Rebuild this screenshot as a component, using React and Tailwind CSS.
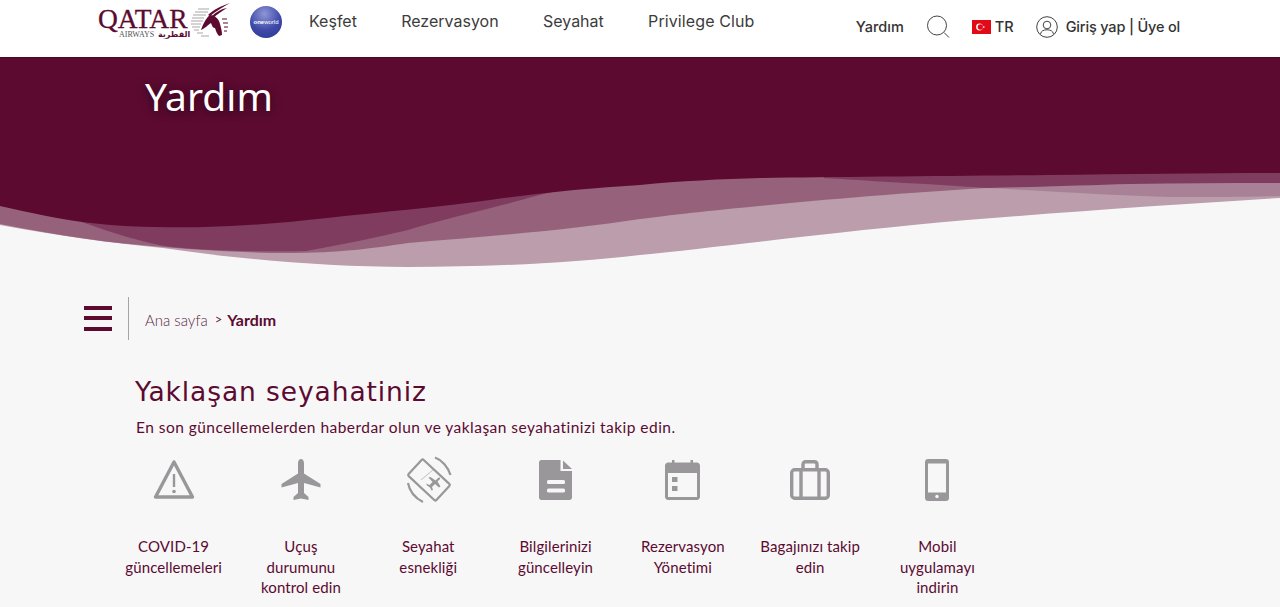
const LATO = { fontFamily: 'Lato, "Noto Sans", sans-serif' };

function Logo() {
  return (
    <div className="relative w-[134px] h-[40px] shrink-0">
      <div className="absolute left-[1px] top-[9px] text-[27.500px] leading-[20px] text-[#5c0a30] [-webkit-text-stroke:0.3px_#5c0a30]" style={{ fontFamily: '"Liberation Serif", serif' }}>QATAR</div>
      <div className="absolute left-[22px] top-[30px] text-[8px] leading-[9px] text-[#555] whitespace-nowrap" style={{ fontFamily: '"Liberation Serif", serif' }}>AIRWAYS</div>
      <div className="absolute left-[61px] top-[29px] text-[8px] leading-[11px] text-[#5c0a30] font-bold whitespace-nowrap" style={{ fontFamily: '"DejaVu Sans", sans-serif' }}>القطرية</div>
      <svg className="absolute left-[92px] top-0" width="44" height="40" viewBox="0 0 44 40">
        <g stroke="#aaa5a8" strokeWidth="1.200">
          <path d="M9 9H20M6 12H19M4 15H17M3 18H15M2 21H14M2 24H12M3 27H11M5 30H10M8 33H14M12 36H20" />
        </g>
        <path d="M41 3C32 6 24 10 19 15L21 16C27 11 34 7 41 3Z" fill="#5c0a30" />
        <path d="M38 8C32 9 27 12 23 16L25 17C29 14 33 11 38 8Z" fill="#5c0a30" />
        <path d="M12 30C14 24 17 18 21 15C26 15 30 19 31 24C32 28 33 31 33 35L30 36C28 34 27 31 26 28C24 28 23 26 22 23C19 25 15 29 12 30Z" fill="#5c0a30" />
        <path d="M33 19H38M34 23H39M35 27H39M35 31H38" stroke="#5c0a30" strokeWidth="1.200" />
      </svg>
    </div>
  );
}

function Oneworld() {
  return (
    <div className="w-[32px] h-[32px] rounded-full flex items-center justify-center shrink-0 bg-[radial-gradient(circle_at_45%_25%,#8f96d6,#3d48a8_55%,#2c3590)]">
      <span className="text-[6px] leading-none text-white whitespace-nowrap" style={{ fontFamily: '"Liberation Sans", sans-serif' }}><b>one</b>world</span>
    </div>
  );
}

function Flag() {
  return (
    <svg width="19" height="14" viewBox="0 0 19 14" className="shrink-0 block">
      <rect width="19" height="14" fill="#e30a17" />
      <circle cx="7.500" cy="7" r="3.400" fill="#fff" />
      <circle cx="8.400" cy="7" r="2.700" fill="#e30a17" />
      <path d="M10.200 7l2.600-.9-1.600 2.200V5.700l1.600 2.200z" fill="#fff" />
    </svg>
  );
}

const G = '#999799';
const BG = '#f7f7f8';

const icons = {
  warn: (
    <svg width="42" height="42" viewBox="0 0 42 42" fill="none">
      <path d="M21 3L39.500 38H2.500Z" stroke={G} strokeWidth="3.400" strokeLinejoin="round" />
      <path d="M21 15V28" stroke={G} strokeWidth="2.400" />
      <circle cx="21" cy="32.500" r="1.800" fill={G} />
    </svg>
  ),
  plane: (
    <svg width="40" height="42" viewBox="0 0 40 42">
      <path d="M20 0C21.800 0 23 1.800 23 4V14.500L39.500 25V28.500L23 24V34L27.500 38V41L20 39.500L12.500 41V38L17 34V24L.5 28.500V25L17 14.500V4C17 1.800 18.200 0 20 0Z" fill={G} />
    </svg>
  ),
  flex: (
    <svg width="46" height="48" viewBox="0 0 46 48" fill="none" className="ml-[1px]">
      <rect x="4" y="13" width="38" height="22" rx="1.500" transform="rotate(43 23 24)" stroke={G} strokeWidth="2.200" />
      <path d="M15 24L28 13" stroke={G} strokeWidth=".6" />
      <path d="M29 1.500C36 4 42 11 44.500 19M2 27C3.500 35 9 42 17 46" stroke={G} strokeWidth="2.200" />
      <path d="M20 27.500l3.500 1.500 3-3-4-4.500 2-.5 5 3.500 2.500-2.500c1-1 2.500-.5 2 1l-2.500 2.500 3 5-1.500 1-4-3.500-3 3 1 3-1.500.5-1.500-3-3-2z" fill={G} />
    </svg>
  ),
  doc: (
    <svg width="34" height="42" viewBox="0 0 34 42">
      <path d="M2.500 1H21.500V12H33V38.500C33 40 32 41 30.500 41H2.500C1 41 0 40 0 38.500V3.500C0 2 1 1 2.500 1Z" fill={G} />
      <path d="M24 1.500L33 10H24Z" fill={G} />
      <rect x="8" y="21" width="18" height="4" rx="1.500" fill={BG} />
      <rect x="8" y="29.500" width="18" height="4" rx="1.500" fill={BG} />
    </svg>
  ),
  cal: (
    <svg width="35" height="40" viewBox="0 0 35 40">
      <path d="M7 0h2.500v2.500h16V0H28v2.500h4c1.500 0 3 1.500 3 3V37c0 1.500-1.500 3-3 3H3c-1.500 0-3-1.500-3-3V5.500c0-1.500 1.500-3 3-3h4z" fill={G} />
      <rect x="3" y="13" width="29" height="24" fill={BG} />
      <rect x="7" y="17" width="5.500" height="5" fill={G} />
      <rect x="7" y="26" width="5.500" height="5" fill={G} />
    </svg>
  ),
  bag: (
    <svg width="40" height="40" viewBox="0 0 40 40" fill="none">
      <rect x="1.700" y="9.700" width="36.600" height="28.600" rx="3" stroke={G} strokeWidth="3.400" />
      <path d="M11 10V38M29 10V38" stroke={G} strokeWidth="3.400" />
      <path d="M13 9V4.500C13 2.800 14 1.700 15.700 1.700H24.300C26 1.700 27 2.800 27 4.500V9" stroke={G} strokeWidth="3.400" />
    </svg>
  ),
  phone: (
    <svg width="24" height="42" viewBox="0 0 24 42">
      <path d="M3 0H21C22.700 0 24 1.300 24 3V39C24 40.700 22.700 42 21 42H3C1.300 42 0 40.700 0 39V3C0 1.300 1.300 0 3 0Z" fill={G} />
      <rect x="3" y="4.500" width="18" height="29" fill={BG} />
      <circle cx="12" cy="37.500" r="1.700" fill={BG} />
    </svg>
  ),
};

const items = [
  ['warn', ['COVID-19', 'güncellemeleri']],
  ['plane', ['Uçuş', 'durumunu', 'kontrol edin']],
  ['flex', ['Seyahat', 'esnekliği']],
  ['doc', ['Bilgilerinizi', 'güncelleyin']],
  ['cal', ['Rezervasyon', 'Yönetimi']],
  ['bag', ['Bagajınızı takip', 'edin']],
  ['phone', ['Mobil', 'uygulamayı', 'indirin']],
];

function Wave() {
  return (
    <svg className="block bg-[#f7f7f8]" width="1280" height="100" viewBox="0 170 1280 100">
      <path fill="#bb9dac" d="M0,225 C60,236 110,243 163,248 C230,258 320,267 408,267 C490,267 570,263 640,255 C720,247 850,230 967,220 C1080,211 1180,204 1280,198 L1280,170 L0,170Z" />
      <path fill="#a98197" d="M987,188 C1060,192 1120,196 1170,197 C1210,197 1250,197 1280,196 L1280,170 L987,170Z" />
      <path fill="#96617b" d="M0,224 C60,236 110,243 163,247 C200,250 250,253 286,253 C340,253 375,248 408,243 C490,236 570,230 640,219 C700,211 850,196 987,188 L987,170 L0,170Z" />
      <path fill="#7f3c5f" d="M82,222 C110,232 140,242 171,247 C215,251 260,252 306,251 C340,245 375,238 408,230 C440,220 480,211 510,203 C535,196 560,190 600,180 L600,170 L82,170Z" />
      <path fill="#7f3c5f" d="M824,178 C860,180 900,183 926,184 L987,188 C1040,187 1090,185 1130,184 C1180,183 1230,183 1280,183 L1280,170 L824,170Z" />
      <path fill="#5c0a30" d="M0,170 L0,206 C30,213 60,219 82,222 C120,227 170,228 204,227 C250,226 290,222 327,218 C380,212 440,207 490,200 C540,193 590,188 640,185 C680,181 722,179 760,178 C830,177 960,176 1048,175 C1130,174 1210,173 1280,173 L1280,170Z" />
    </svg>
  );
}

export default function App() {
  return (
    <div className="w-[1280px] h-[607px] overflow-hidden bg-[#f7f7f8] text-[#5c0a30]" style={LATO}>
      <header className="h-[57px] bg-white flex items-start pl-[97px]" style={{ fontFamily: 'Inter, sans-serif' }}>
        <div className="flex items-center h-[40px]"><Logo /></div>
        <div className="ml-[19px] mt-[6px]"><Oneworld /></div>
        <nav className="ml-[27px] flex gap-[44.300px] text-[16px] leading-[20px] text-[#3c3c3c] pt-[11px]">
          <span>Keşfet</span><span>Rezervasyon</span><span>Seyahat</span><span className="tracking-[0.100px]">Privilege Club</span>
        </nav>
        <div className="ml-auto pr-[100px] flex items-center h-[54px] text-[14.500px] font-medium text-[#333] whitespace-nowrap">
          <span>Yardım</span>
          <svg className="ml-[22px]" width="24" height="24" viewBox="0 0 24 24" fill="none" stroke="#444" strokeWidth="1">
            <circle cx="11" cy="10.500" r="9.500" /><path d="M18 17.500L23 22.500" />
          </svg>
          <span className="ml-[22px]"><Flag /></span>
          <span className="ml-[4px]">TR</span>
          <svg className="ml-[22px]" width="22" height="22" viewBox="0 0 22 22" fill="none" stroke="#444" strokeWidth="1">
            <circle cx="11" cy="11" r="10.300" /><circle cx="11" cy="9" r="3.800" /><path d="M4.500 18C5 15 7.500 13.800 11 13.800S17 15 17.500 18" />
          </svg>
          <span className="ml-[8px] tracking-[-0.170px]">Giriş yap | Üye ol</span>
        </div>
      </header>
      <div className="h-[113px] bg-[#5c0a30] border-t border-[#4a0826] pl-[145px] pt-[14px]">
        <h1 className="text-[39px] leading-[48px] text-white [text-shadow:0_2px_10px_rgba(0,0,0,0.6)]" style={{ fontFamily: '"Noto Sans", sans-serif' }}>Yardım</h1>
      </div>
      <Wave />
      <div className="flex items-center h-[43px] mt-[27px] pl-[84px]">
        <div className="flex flex-col gap-[6.500px] w-[28px] mt-[-1px]">
          <div className="h-[4px] bg-[#5c0a30]" /><div className="h-[4px] bg-[#5c0a30]" /><div className="h-[4px] bg-[#5c0a30]" />
        </div>
        <div className="w-px h-[43px] bg-[#a9a3a6] ml-[16px]" />
        <span className="ml-[16px] text-[15px] font-light text-[#5c2a45] pt-[4px]">Ana sayfa</span>
        <span className="ml-[7px] text-[13px] text-[#5c2a45] pt-[2px]">&gt;</span>
        <span className="ml-[5px] text-[16px] font-bold pt-[2px]">Yardım</span>
      </div>
      <h2 className="ml-[135px] mt-[33px] text-[26.500px] leading-[38px] tracking-[0.900px] whitespace-nowrap" style={{ fontFamily: '"DejaVu Sans", sans-serif', fontWeight: 400 }}>Yaklaşan seyahatiniz</h2>
      <p className="ml-[136px] mt-[6px] text-[15.500px] leading-[20px] tracking-[0.460px] whitespace-nowrap">En son güncellemelerden haberdar olun ve yaklaşan seyahatinizi takip edin.</p>
      <div className="ml-[110px] mt-[9px] flex">
        {items.map(([k, lines]) => (
          <div key={k} className="w-[127.300px] flex flex-col items-center text-[15px] leading-[20.500px] text-center tracking-[0.100px]">
            <div className="h-[68px] flex items-center justify-center">{icons[k]}</div>
            <div className="mt-[22px]">
              {lines.map((l) => <div key={l} className="whitespace-nowrap">{l}</div>)}
            </div>
          </div>
        ))}
      </div>
    </div>
  );
}
